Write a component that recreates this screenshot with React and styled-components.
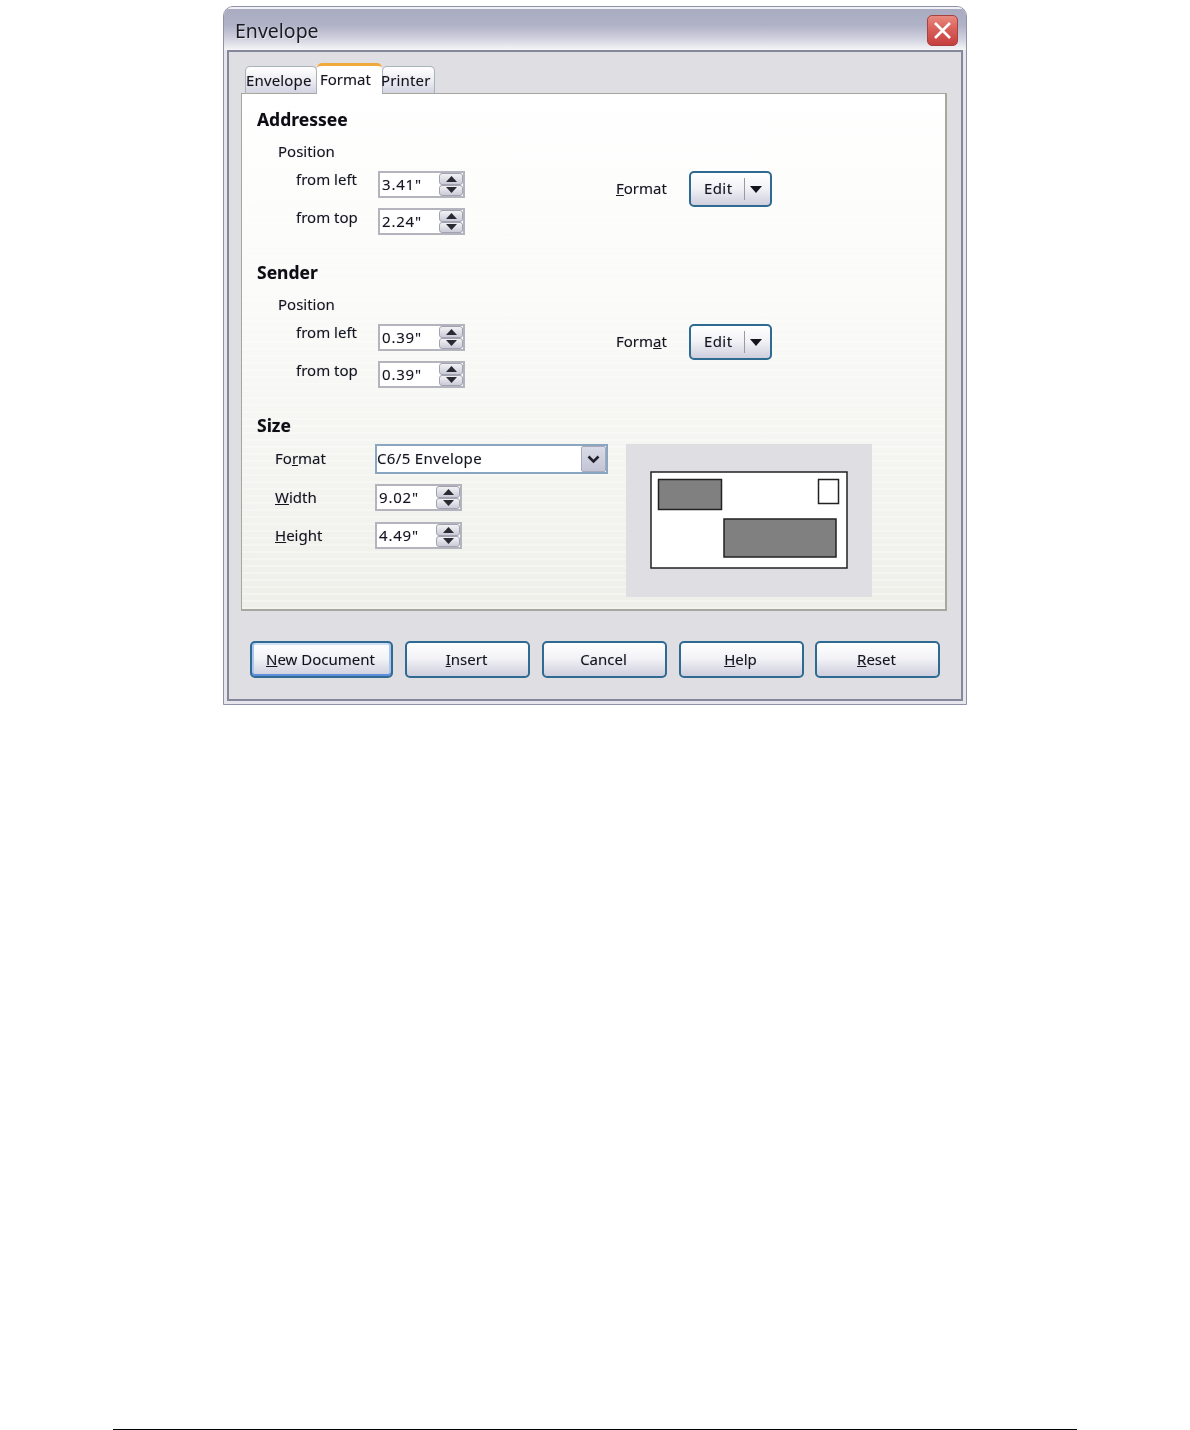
import React from 'react';
import styled, { createGlobalStyle } from 'styled-components';

const GlobalStyle = createGlobalStyle`
  html, body {
    margin: 0;
    padding: 0;
    background: #fff;
  }
  body {
    font-family: "Noto Sans", "Liberation Sans", sans-serif;
    font-size: 15px;
    color: #14141e;
    text-shadow: 0 0 1px rgba(30, 30, 70, 0.3);
  }
`;

const Page = styled.div`
  height: 1430px;
  padding-top: 6px;
  box-sizing: border-box;
  display: flex;
  flex-direction: column;
  align-items: center;
`;

const Window = styled.div`
  width: 744px;
  box-sizing: border-box;
  border: 1px solid #8f91a8;
  border-radius: 10px 10px 0 0;
  background: #e6e6ec;
  overflow: hidden;
  filter: blur(0.35px);
`;

const TitleBar = styled.div`
  height: 43px;
  box-sizing: border-box;
  padding: 7px 8px 5px 11px;
  display: flex;
  align-items: center;
  justify-content: space-between;
  border-top: 2px solid #f0f0f5;
  background: linear-gradient(#a9abc1 0%, #b0b2c7 40%, #d2d3df 74%, #f6f6f8 100%);
`;

const Title = styled.div`
  font-size: 19.5px;
  color: #1a1a22;
  text-shadow: 1px 1px 1px rgba(255, 255, 255, 0.5);
`;

const CloseButton = styled.div`
  width: 31px;
  height: 31px;
  box-sizing: border-box;
  border: 1px solid #a8403f;
  border-radius: 5px;
  background: linear-gradient(#e88a80 0%, #d9605a 45%, #c53f3f 100%);
  display: flex;
  align-items: center;
  justify-content: center;
`;

const Frame = styled.div`
  padding: 0 3px 3px;
`;

const Body = styled.div`
  border: 2px solid #85879c;
  background: #dfdfe3;
  padding: 0 14px 21px 12px;
`;

const TabStrip = styled.div`
  display: flex;
  align-items: flex-end;
  height: 41px;
  padding-left: 4px;
`;

const Tab = styled.div`
  position: relative;
  box-sizing: border-box;
  border: 1px solid #a9b3ba;
  border-bottom: none;
  border-radius: 5px 5px 0 0;
  white-space: nowrap;
  text-indent: ${(p) => p.$indent}px;
  ${(p) =>
    p.$active
      ? `
    width: 65px;
    height: 31px;
    margin-bottom: -1px;
    padding-top: 3px;
    z-index: 1;
    background: #fff;
    border: none;
    border-top: 3px solid #f2a93b;
  `
      : `
    width: ${p.$width}px;
    height: 27px;
    padding-top: 3px;
    letter-spacing: 0.15px;
    background: linear-gradient(#fff 0%, #eeeef3 50%, #d2d3e1 100%);
  `}
`;

const Panel = styled.div`
  box-sizing: border-box;
  border: 1px solid #a6a89f;
  border-right-width: 2px;
  border-bottom-width: 2px;
  padding: 15px 0 12px 15px;
  background:
    repeating-linear-gradient(0deg, rgba(255, 255, 255, 0.28) 0 2px, rgba(255, 255, 255, 0) 2px 7px),
    linear-gradient(#ffffff 0%, #fafaf8 40%, #efefea 100%);
`;

const Section = styled.div`
  margin-bottom: 27px;
`;

const Heading = styled.div`
  font-weight: 700;
  font-size: 17.5px;
  line-height: 20px;
  color: #0c0c12;
`;

const SubHeading = styled.div`
  margin: 12px 0 10px 21px;
  line-height: 20px;
`;

const Columns = styled.div`
  display: flex;
  align-items: flex-start;
  margin-top: ${(p) => p.$top || 0}px;
`;

const FieldColumn = styled.div`
  width: ${(p) => p.$width}px;
  flex: none;
  display: flex;
  flex-direction: column;
  gap: ${(p) => p.$gap || 10}px;
`;

const FieldRow = styled.div`
  display: flex;
  align-items: center;
  height: ${(p) => p.$height || 27}px;
  margin-bottom: ${(p) => p.$after || 0}px;
  padding-left: ${(p) => p.$indent}px;
`;

const FieldLabel = styled.div`
  width: ${(p) => p.$width}px;
  flex: none;
  line-height: 20px;
  margin-bottom: ${(p) => p.$lift || 2}px;
`;

const FieldBox = styled.div`
  width: 87px;
  height: 27px;
  box-sizing: border-box;
  border: 2px solid #b3b4bd;
  background: #fff;
  display: flex;
  align-items: center;
  justify-content: space-between;
  padding: 0 0 0 2px;
  letter-spacing: 0.8px;
`;

const BoxText = styled.span`
  margin-bottom: 2px;
`;

const SpinColumn = styled.div`
  width: 24px;
  display: flex;
  flex-direction: column;
`;

const SpinButton = styled.div`
  height: 11.5px;
  box-sizing: border-box;
  border: 1px solid #a2a2b0;
  border-radius: 3px;
  background: linear-gradient(#f2f2f5, #cbcbd8);
  display: flex;
  align-items: center;
  justify-content: center;
`;

const FormatGroup = styled.div`
  display: flex;
  align-items: center;
`;

const FormatLabel = styled.div`
  width: 73px;
  margin-bottom: 2px;
`;

const EditButton = styled.div`
  width: 83px;
  height: 36px;
  box-sizing: border-box;
  border: 2px solid #2f6a93;
  border-radius: 5px;
  background: linear-gradient(#ffffff 0%, #f3f3f7 45%, #cfcfde 100%);
  display: flex;
  align-items: center;
  padding-left: 13px;
  letter-spacing: 0.4px;
`;

const EditDivider = styled.div`
  width: 1px;
  height: 22px;
  margin: 0 5px 0 12px;
  background: #9a9aa6;
`;

const Combo = styled.div`
  width: 233px;
  height: 30px;
  box-sizing: border-box;
  border: 2px solid #8aa6c0;
  background: #fff;
  display: flex;
  align-items: center;
  justify-content: space-between;
  letter-spacing: 0.35px;
`;

const ComboArrow = styled.div`
  width: 25px;
  height: 26px;
  box-sizing: border-box;
  border: 1px solid #a9abbb;
  border-radius: 2px;
  background: linear-gradient(#dadbe7, #c3c5d6);
  display: flex;
  align-items: center;
  justify-content: center;
`;

const Preview = styled.div`
  width: 246px;
  height: 153px;
  box-sizing: border-box;
  padding-bottom: 2px;
  flex: none;
  background: #dfdfe3;
  display: flex;
  align-items: center;
  justify-content: center;
`;

const ButtonRow = styled.div`
  display: flex;
  gap: 12px;
  margin-top: 30px;
  padding-left: 9px;

  & > :last-child {
    margin-left: -1px;
  }
`;

const DialogButton = styled.div`
  width: ${(p) => p.$width}px;
  height: 37px;
  box-sizing: border-box;
  border: 2px solid #2f6a93;
  border-radius: 5px;
  background: linear-gradient(#ffffff 0%, #f3f3f7 45%, #cfcfde 100%);
  display: flex;
  align-items: center;
  justify-content: center;
  padding: 0 2px 2px 0;
  ${(p) => p.$primary && 'box-shadow: inset 0 -2px 0 #5f8fdc, inset 2px 0 0 #a9c6ee, inset -2px 0 0 #a9c6ee, inset 0 2px 0 #cfe0f6;'}
`;

const FooterRule = styled.div`
  width: 964px;
  height: 1px;
  margin-top: auto;
  background: #000;
`;

const SpinField = ({ value }) => (
  <FieldBox>
    <BoxText>{value}</BoxText>
    <SpinColumn>
      <SpinButton>
        <svg width="11" height="6" viewBox="0 0 11 6"><path d="M5.5 0 L11 6 H0 Z" fill="#2a2a34" /></svg>
      </SpinButton>
      <SpinButton>
        <svg width="11" height="6" viewBox="0 0 11 6"><path d="M0 0 H11 L5.5 6 Z" fill="#2a2a34" /></svg>
      </SpinButton>
    </SpinColumn>
  </FieldBox>
);

const PositionBlock = ({ left, top, label }) => (
  <>
    <SubHeading>Position</SubHeading>
    <Columns>
      <FieldColumn $width={359}>
        <FieldRow $indent={39}>
          <FieldLabel $width={82} $lift={11}>from left</FieldLabel>
          <SpinField value={left} />
        </FieldRow>
        <FieldRow $indent={39}>
          <FieldLabel $width={82} $lift={10}>from top</FieldLabel>
          <SpinField value={top} />
        </FieldRow>
      </FieldColumn>
      <FormatGroup>
        <FormatLabel>{label}</FormatLabel>
        <EditButton>
          <BoxText>Edit</BoxText>
          <EditDivider />
          <svg width="12" height="7" viewBox="0 0 12 7"><path d="M0 0 H12 L6 7 Z" fill="#14141c" /></svg>
        </EditButton>
      </FormatGroup>
    </Columns>
  </>
);

export default function App() {
  return (
    <Page>
      <GlobalStyle />
      <Window>
        <TitleBar>
          <Title>Envelope</Title>
          <CloseButton>
            <svg width="19" height="19" viewBox="0 0 19 19">
              <path d="M2 2 L17 17 M17 2 L2 17" stroke="#fff" strokeWidth="2.6" fill="none" />
            </svg>
          </CloseButton>
        </TitleBar>
        <Frame>
          <Body>
            <TabStrip>
              <Tab $width={72} $indent={0}>Envelope</Tab>
              <Tab $active $indent={3}>Format</Tab>
              <Tab $width={53} $indent={-2}>Printer</Tab>
            </TabStrip>
            <Panel>
              <Section>
                <Heading>Addressee</Heading>
                <PositionBlock left={'3.41"'} top={'2.24"'} label={<><u>F</u>ormat</>} />
              </Section>
              <Section>
                <Heading>Sender</Heading>
                <PositionBlock left={'0.39"'} top={'0.39"'} label={<>Form<u>a</u>t</>} />
              </Section>
              <Heading>Size</Heading>
              <Columns $top={9}>
                <FieldColumn $width={369} $gap={11}>
                  <FieldRow $indent={18} $height={30} $after={-1}>
                    <FieldLabel $width={100}>Fo<u>r</u>mat</FieldLabel>
                    <Combo>
                      <BoxText>C6/5 Envelope</BoxText>
                      <ComboArrow>
                        <svg width="13" height="9" viewBox="0 0 13 9"><path d="M1.5 1.5 L6.5 6.5 L11.5 1.5" stroke="#22222c" strokeWidth="2.6" fill="none" /></svg>
                      </ComboArrow>
                    </Combo>
                  </FieldRow>
                  <FieldRow $indent={18}>
                    <FieldLabel $width={100}><u>W</u>idth</FieldLabel>
                    <SpinField value={'9.02"'} />
                  </FieldRow>
                  <FieldRow $indent={18}>
                    <FieldLabel $width={100}><u>H</u>eight</FieldLabel>
                    <SpinField value={'4.49"'} />
                  </FieldRow>
                </FieldColumn>
                <Preview>
                  <svg width="198" height="98" viewBox="0 0 198 98">
                    <rect x="1" y="1" width="196" height="96" fill="#fff" stroke="#222" strokeWidth="1.5" />
                    <rect x="8.5" y="8.5" width="63" height="30" fill="#808080" stroke="#222" strokeWidth="1.5" />
                    <rect x="168.5" y="8.5" width="20" height="24" fill="#fff" stroke="#222" strokeWidth="1.5" />
                    <rect x="74" y="48" width="112" height="38" fill="#808080" stroke="#222" strokeWidth="1.5" />
                  </svg>
                </Preview>
              </Columns>
            </Panel>
            <ButtonRow>
              <DialogButton $width={143} $primary><span><u>N</u>ew Document</span></DialogButton>
              <DialogButton $width={125}><span><u>I</u>nsert</span></DialogButton>
              <DialogButton $width={125}>Cancel</DialogButton>
              <DialogButton $width={125}><span><u>H</u>elp</span></DialogButton>
              <DialogButton $width={125}><span><u>R</u>eset</span></DialogButton>
            </ButtonRow>
          </Body>
        </Frame>
      </Window>
      <FooterRule />
    </Page>
  );
}
